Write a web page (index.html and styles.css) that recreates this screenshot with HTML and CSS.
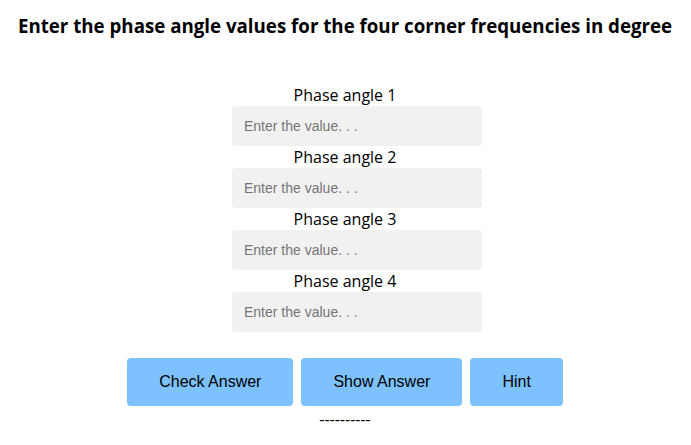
FILE: index.html
```html
<!DOCTYPE html>
<html>
<head>
<meta charset="utf-8">
<link rel="stylesheet" href="styles.css">
</head>
<body>
<div class="page">
  <h3 class="title">Enter the phase angle values for the four corner frequencies in degree</h3>
  <div class="fields">
    <label class="label" for="p1">Phase angle 1</label>
    <input class="field" id="p1" type="text" placeholder="Enter the value. . .">
    <label class="label" for="p2">Phase angle 2</label>
    <input class="field" id="p2" type="text" placeholder="Enter the value. . .">
    <label class="label" for="p3">Phase angle 3</label>
    <input class="field" id="p3" type="text" placeholder="Enter the value. . .">
    <label class="label" for="p4">Phase angle 4</label>
    <input class="field" id="p4" type="text" placeholder="Enter the value. . .">
  </div>
  <div class="actions">
    <button class="btn" type="button">Check Answer</button>
    <button class="btn" type="button">Show Answer</button>
    <button class="btn" type="button">Hint</button>
  </div>
  <div class="result">----------</div>
</div>
</body>
</html>
```
FILE: styles.css
```css
html, body {
  background: #ffffff;
}
body {
  margin: 8px;
  font-family: "Open Sans", sans-serif;
  color: #000;
}
.page {
  display: flex;
  flex-direction: column;
  align-items: center;
  padding-right: 1px;
}
.title {
  margin: 5px 0 0 0;
  font-size: 18.72px;
  font-weight: 700;
  line-height: 25.5px;
  text-align: center;
  white-space: nowrap;
}
.fields {
  display: flex;
  flex-direction: column;
  align-items: center;
  margin-top: 45.5px;
}
.label {
  font-size: 16px;
  line-height: 22px;
}
.field {
  box-sizing: border-box;
  width: 250px;
  height: 40px;
  margin-left: 24px;
  border: none;
  border-radius: 4px;
  background: #f1f1f1;
  padding: 0 12px;
  font-family: "Liberation Sans", Arial, sans-serif;
  font-size: 14px;
  outline: none;
}
.field::placeholder {
  color: #757575;
}
.actions {
  display: flex;
  gap: 8px;
  margin-top: 26px;
}
.btn {
  height: 48px;
  padding: 0 32px;
  border: none;
  border-radius: 4px;
  background: #7dc1ff;
  color: #000;
  font-family: "Liberation Sans", Arial, sans-serif;
  font-size: 16px;
}
.result {
  margin-top: 2px;
  font-size: 16px;
  line-height: 22px;
}
```
